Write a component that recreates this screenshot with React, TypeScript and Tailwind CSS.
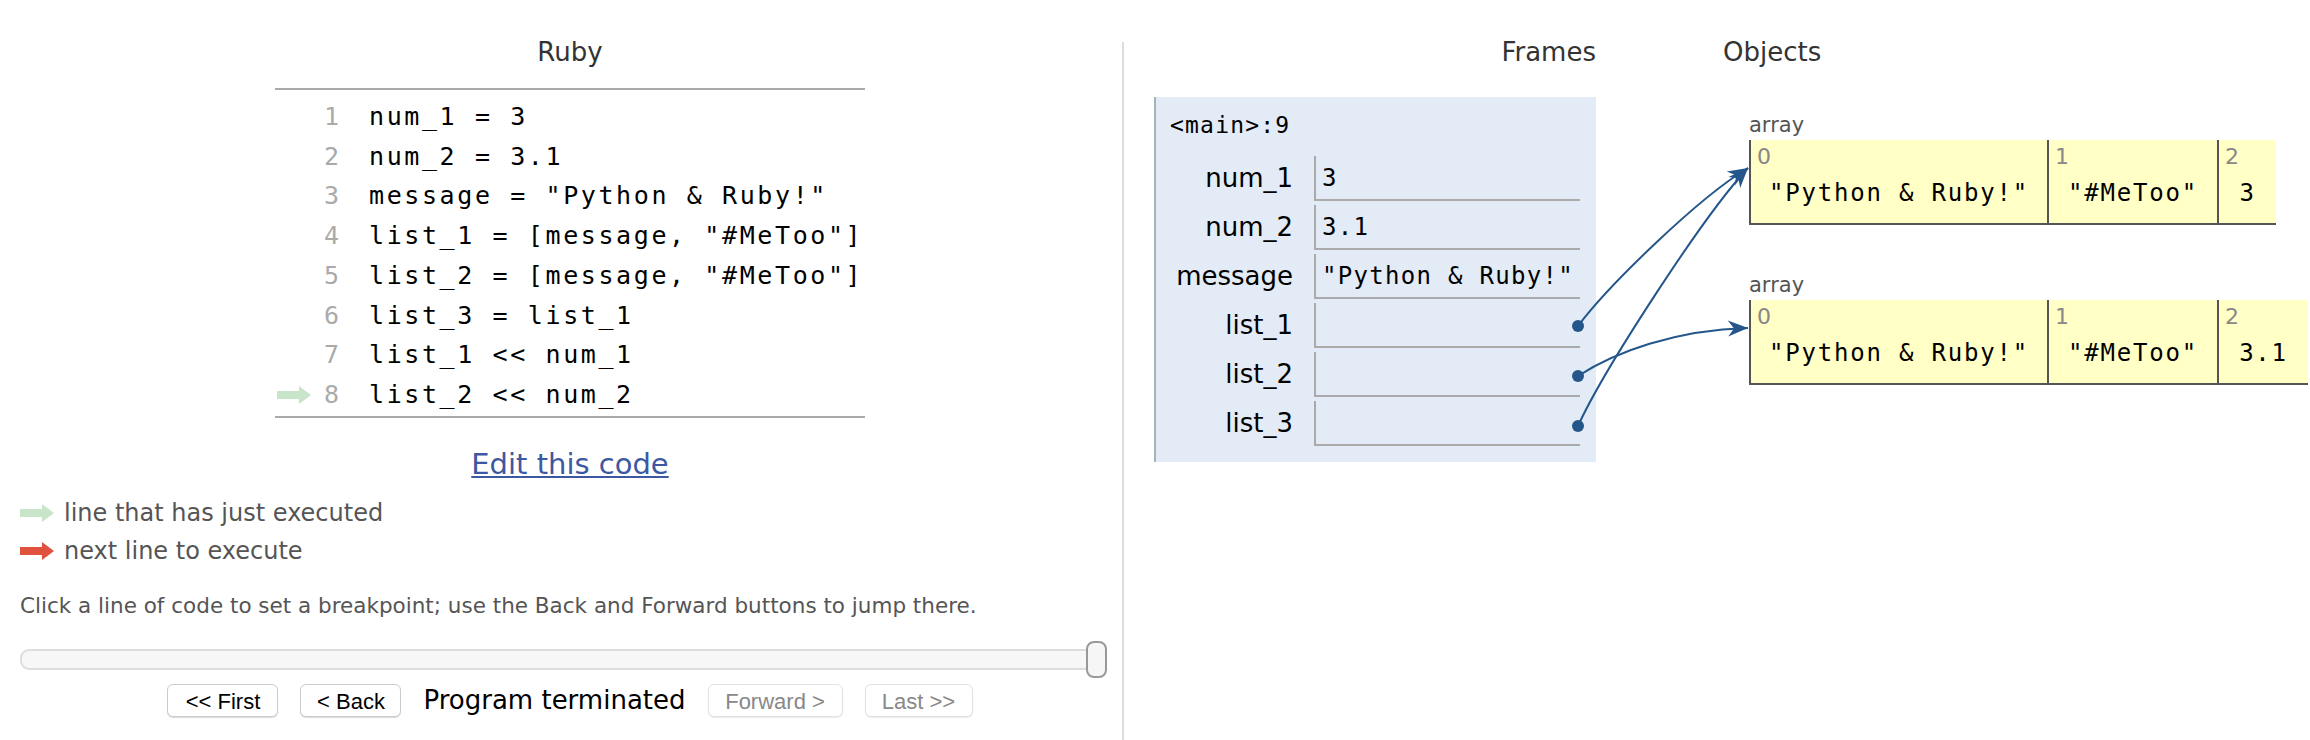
import React from "react";

const SANS = "font-['DejaVu_Sans',Verdana,sans-serif]";
const MONO = "font-['DejaVu_Sans_Mono',monospace]";

const codeLines = [
  'num_1 = 3',
  'num_2 = 3.1',
  'message = "Python & Ruby!"',
  'list_1 = [message, "#MeToo"]',
  'list_2 = [message, "#MeToo"]',
  'list_3 = list_1',
  'list_1 << num_1',
  'list_2 << num_2',
];

function Arrow({ color }: { color: string }) {
  return (
    <svg width="34" height="18" viewBox="0 0 34 18" className="shrink-0">
      <polygon points="0,5 22,5 22,0 34,9 22,18 22,13 0,13" fill={color} />
    </svg>
  );
}

function head(tx: number, ty: number, dx: number, dy: number) {
  const len = Math.hypot(dx, dy);
  const ux = dx / len;
  const uy = dy / len;
  const px = -uy;
  const py = ux;
  const L = 20;
  const W = 8;
  const notch = 14;
  const bx = tx - ux * L;
  const by = ty - uy * L;
  const nx = tx - ux * notch;
  const ny = ty - uy * notch;
  return `${tx},${ty} ${bx + px * W},${by + py * W} ${nx},${ny} ${bx - px * W},${by - py * W}`;
}

const vars: { name: string; value: string }[] = [
  { name: "num_1", value: "3" },
  { name: "num_2", value: "3.1" },
  { name: "message", value: '"Python & Ruby!"' },
  { name: "list_1", value: "" },
  { name: "list_2", value: "" },
  { name: "list_3", value: "" },
];

function HeapArray({ items }: { items: { v: string; w: string }[] }) {
  return (
    <div>
      <div className={`${SANS} text-[21px] leading-[24px] text-[#555] mb-[3px]`}>array</div>
      <div className="flex">
        {items.map((it, i) => (
          <div
            key={i}
            className={`${it.w} h-[85px] bg-[#ffffc6] border-l-2 border-b-2 border-[#555] pt-[6px] shrink-0`}
          >
            <div className={`${SANS} text-[22px] leading-[22px] text-[#888] pl-[6px]`}>{i}</div>
            <div
              className={`${MONO} text-[24px] leading-[30px] tracking-[1.8px] text-black text-center mt-[10px] whitespace-pre`}
            >
              {it.v}
            </div>
          </div>
        ))}
      </div>
    </div>
  );
}

export default function App() {
  const c = "#24568a";
  return (
    <div className="relative w-[2310px] h-[740px] bg-white overflow-hidden flex">
      {/* Left panel */}
      <div className="w-[1122px] shrink-0 pl-[20px] pr-[2px] pt-[37px] flex flex-col">
        <div className={`${SANS} text-[26px] leading-[30px] text-[#333] text-center`}>Ruby</div>
        <div className="w-[590px] mx-auto mt-[21px] border-t-2 border-b-2 border-[#aaa] pt-[7px] pb-[1px]">
          {codeLines.map((line, i) => (
            <div key={i} className="flex items-center h-[39.7px]">
              <div className="w-[40px] flex justify-end pr-[4px]">
                {i === 7 && (
                  <svg width="34" height="18" viewBox="0 0 34 18">
                    <polygon points="0,5 22,5 22,0 34,9 22,18 22,13 0,13" fill="#c9e5c9" />
                  </svg>
                )}
              </div>
              <div className={`${MONO} w-[24px] text-right text-[25px] text-[#aaa]`}>{i + 1}</div>
              <div className={`${MONO} pl-[30px] text-[25px] tracking-[2.6px] text-black whitespace-pre`}>{line}</div>
            </div>
          ))}
        </div>
        <div className="text-center mt-[31px] leading-[30px]">
          <a href="#" className={`${SANS} text-[29px] text-[#3d58a2] underline`}>Edit this code</a>
        </div>
        <div className="mt-[11px] flex flex-col">
          <div className="flex items-center h-[38.5px] gap-[10px]">
            <Arrow color="#c9e5c9" />
            <span className={`${SANS} text-[24px] text-[#555]`}>line that has just executed</span>
          </div>
          <div className="flex items-center h-[38.5px] gap-[10px]">
            <Arrow color="#e0513e" />
            <span className={`${SANS} text-[24px] text-[#555]`}>next line to execute</span>
          </div>
        </div>
        <div className={`${SANS} text-[21.5px] leading-[30px] text-[#555] mt-[20px] whitespace-nowrap`}>
          Click a line of code to set a breakpoint; use the Back and Forward buttons to jump there.
        </div>
        <div className="mt-[20px] w-[1087px] h-[37px] flex items-center">
          <div className="flex-1 h-[21px] bg-[#f7f7f7] border-2 border-[#ddd] rounded-[9px]" />
          <div className="w-[21px] h-[37px] -ml-[21px] bg-[#f6f6f6] border-2 border-[#999] rounded-[8px]" />
        </div>
        <div className="mt-[3px] flex items-center justify-center gap-[22px] font-['Liberation_Sans',Arial,sans-serif] text-[22px]">
          <button className="w-[111px] h-[33px] bg-white border border-[#ccc] rounded-[6px] shadow-[0_1px_1px_rgba(0,0,0,0.15)] text-black">&lt;&lt; First</button>
          <button className="w-[101px] h-[33px] bg-white border border-[#ccc] rounded-[6px] shadow-[0_1px_1px_rgba(0,0,0,0.15)] text-black">&lt; Back</button>
          <span className={`${SANS} text-[26px] text-black`}>Program terminated</span>
          <button className="w-[135px] h-[33px] bg-white border border-[#e2e2e2] rounded-[6px] shadow-[0_1px_1px_rgba(0,0,0,0.08)] text-[#888]">Forward &gt;</button>
          <button className="w-[108px] h-[33px] bg-white border border-[#e2e2e2] rounded-[6px] shadow-[0_1px_1px_rgba(0,0,0,0.08)] text-[#888]">Last &gt;&gt;</button>
        </div>
      </div>

      {/* Divider */}
      <div className="w-[2px] bg-[#ddd] mt-[42px] shrink-0" />

      {/* Right panel */}
      <div className="pl-[30px] pt-[37px] flex">
        <div className="w-[442px] shrink-0">
          <div className={`${SANS} text-[26px] leading-[30px] text-[#333] text-right`}>Frames</div>
          <div className="mt-[30px] h-[365px] bg-[#e2ebf6] border-l-2 border-[#a6b3b6] pl-[14px] pt-[13px]">
            <div className={`${MONO} text-[23px] leading-[30px] tracking-[1.2px] text-black`}>&lt;main&gt;:9</div>
            <div className="mt-[16px] flex flex-col gap-[4px]">
              {vars.map((v) => (
                <div key={v.name} className="flex items-center">
                  <div className={`${SANS} w-[123px] text-right text-[26px] text-black whitespace-nowrap`}>{v.name}</div>
                  <div className="ml-[21px] w-[266px] h-[45px] border-l-2 border-b-2 border-[#aaa] flex items-center pl-[6px]">
                    <span className={`${MONO} text-[24px] tracking-[1.3px] text-black whitespace-pre`}>{v.value}</span>
                  </div>
                </div>
              ))}
            </div>
          </div>
        </div>
        <div className="ml-[127px]">
          <div className={`${SANS} text-[26px] leading-[30px] text-[#333]`}>Objects</div>
          <div className="pl-[26px] mt-[46px] flex flex-col gap-[48px]">
            <HeapArray
              items={[
                { v: '"Python & Ruby!"', w: "w-[298px]" },
                { v: '"#MeToo"', w: "w-[170px]" },
                { v: "3", w: "w-[59px]" },
              ]}
            />
            <HeapArray
              items={[
                { v: '"Python & Ruby!"', w: "w-[298px]" },
                { v: '"#MeToo"', w: "w-[170px]" },
                { v: "3.1", w: "w-[91px]" },
              ]}
            />
          </div>
        </div>
      </div>

      {/* Connectors */}
      <svg className="absolute left-0 top-0 pointer-events-none" width="2310" height="740">
        <path d="M1578,326 C1608,286 1698,198 1748,168" stroke={c} strokeWidth="2" fill="none" />
        <path d="M1578,426 C1603,371 1703,216 1748,168" stroke={c} strokeWidth="2" fill="none" />
        <path d="M1578,376 C1615,352 1675,330 1748,328" stroke={c} strokeWidth="2" fill="none" />
        <polygon points={head(1748, 168, 50, -30)} fill={c} />
        <polygon points={head(1748, 168, 45, -48)} fill={c} />
        <polygon points={head(1748, 328, 73, -2)} fill={c} />
        <circle cx="1578" cy="326" r="6" fill={c} />
        <circle cx="1578" cy="376" r="6" fill={c} />
        <circle cx="1578" cy="426" r="6" fill={c} />
      </svg>
    </div>
  );
}
